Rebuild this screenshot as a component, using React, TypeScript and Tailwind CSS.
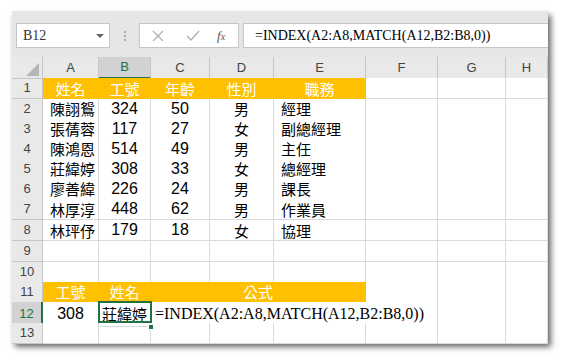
import * as React from "react";

const cols = "grid grid-cols-[31px_56px_52px_59px_64px_92px_72px_68px_42px]";
const heights = [21, 20, 20, 20, 20, 20, 21, 21, 21, 20, 20, 21, 20];

const data = [
  ["陳詡鴛", "324", "50", "男", "經理"],
  ["張蒨蓉", "117", "27", "女", "副總經理"],
  ["陳鴻恩", "514", "49", "男", "主任"],
  ["莊緯婷", "308", "33", "女", "總經理"],
  ["廖善緯", "226", "24", "男", "課長"],
  ["林厚淳", "448", "62", "男", "作業員"],
  ["林玶伃", "179", "18", "女", "協理"],
];

const cjk = { fontFamily: '"Noto Sans CJK TC", "Noto Sans", sans-serif' };
const num = { fontFamily: '"Liberation Sans", Arial, sans-serif' };

function RowHead({ n, active }: { n: number; active?: boolean }) {
  return (
    <div
      className={
        active
          ? "flex items-center justify-center border-b border-r-2 border-b-[#c6c6c6] border-r-[#217346] bg-[#d2d2d2] text-[13px] text-[#217346]"
          : "flex items-center justify-center border-b border-r border-[#c6c6c6] bg-[#e9e9e9] text-[13px] text-[#444]"
      }
      style={{ fontFamily: '"Liberation Sans", sans-serif' }}
    >
      {n}
    </div>
  );
}

function Cell({
  children,
  align = "center",
  orange,
  digits,
  className = "",
}: {
  children?: React.ReactNode;
  align?: "left" | "center";
  orange?: boolean;
  digits?: boolean;
  className?: string;
}) {
  return (
    <div
      className={
        (orange
          ? "border-b border-r border-[#ffc000] bg-[#ffc000] text-white "
          : "border-b border-r border-[#dadada] bg-white text-black ") +
        (align === "left" ? "justify-start pl-[7px] " : "justify-center ") +
        (digits ? "text-[16px] " : "text-[15px] ") +
        "flex items-center whitespace-nowrap leading-none " +
        className
      }
      style={digits ? num : cjk}
    >
      {children}
    </div>
  );
}

function Blank() {
  return <Cell />;
}

export default function App() {
  return (
    <div className="h-[362px] w-[567px] overflow-hidden bg-white pl-[12px] pt-[11px]">
      <div className="h-[332px] w-[536px] bg-[#e6e6e6] shadow-[3px_4px_6px_rgba(0,0,0,0.6)]">
        {/* formula bar */}
        <div className="flex h-[46px] items-start pt-[12px]">
          <div className="ml-[4px] flex h-[25px] w-[94px] items-center justify-between border border-[#c6c6c6] bg-white pl-[6px] pr-[5px]">
            <span className="text-[14px] text-[#333]" style={{ fontFamily: '"Liberation Serif", serif' }}>
              B12
            </span>
            <span className="h-0 w-0 border-x-[4px] border-t-[4px] border-x-transparent border-t-[#666]" />
          </div>
          <div className="flex h-[25px] w-[29px] flex-col items-center justify-center gap-[2px]">
            <span className="h-[2px] w-[2px] bg-[#aaa]" />
            <span className="h-[2px] w-[2px] bg-[#aaa]" />
            <span className="h-[2px] w-[2px] bg-[#aaa]" />
          </div>
          <div className="flex h-[25px] w-[100px] items-center border border-[#c6c6c6] bg-white">
            <svg width="12" height="12" viewBox="0 0 12 12" className="ml-[12px]">
              <path d="M1 1 L11 11 M11 1 L1 11" stroke="#b0b0b0" strokeWidth="1.2" />
            </svg>
            <svg width="14" height="12" viewBox="0 0 14 12" className="ml-[22px]">
              <path d="M1 6 L5 10 L13 1" stroke="#b0b0b0" strokeWidth="1.4" fill="none" />
            </svg>
            <span
              className="ml-[17px] text-[13px] italic text-[#555]"
              style={{ fontFamily: '"Liberation Serif", serif' }}
            >
              f<span className="text-[10px]">x</span>
            </span>
          </div>
          <div className="ml-[4px] flex h-[25px] flex-1 items-center border border-r-0 border-[#c6c6c6] bg-white pl-[11px]">
            <span className="text-[14px] text-black" style={{ fontFamily: '"Liberation Serif", serif' }}>
              =INDEX(A2:A8,MATCH(A12,B2:B8,0))
            </span>
          </div>
        </div>

        {/* column headers */}
        <div className={cols + " h-[21px]"}>
          <div className="relative border-b border-r border-[#c6c6c6] bg-[#e9e9e9]">
            <span className="absolute bottom-[2px] right-[3px] h-0 w-0 border-b-[13px] border-l-[13px] border-b-[#b5b5b5] border-l-transparent" />
          </div>
          {["A", "B", "C", "D", "E", "F", "G", "H"].map((c) => (
            <div
              key={c}
              className={
                c === "B"
                  ? "flex items-center justify-center border-b-2 border-r border-b-[#217346] border-r-[#c6c6c6] bg-[#d2d2d2] text-[13px] text-[#217346]"
                  : "flex items-center justify-center border-b border-r border-[#c6c6c6] bg-[#e9e9e9] text-[13px] text-[#444]"
              }
              style={{ fontFamily: '"Liberation Sans", sans-serif' }}
            >
              {c}
            </div>
          ))}
        </div>

        {/* row 1 */}
        <div className={cols} style={{ height: heights[0] }}>
          <RowHead n={1} />
          <Cell orange>姓名</Cell>
          <Cell orange>工號</Cell>
          <Cell orange>年齡</Cell>
          <Cell orange>性別</Cell>
          <Cell orange>職務</Cell>
          <Blank />
          <Blank />
          <Blank />
        </div>

        {data.map((r, i) => (
          <div key={i} className={cols} style={{ height: heights[i + 1] }}>
            <RowHead n={i + 2} />
            <Cell align="left">{r[0]}</Cell>
            <Cell digits>{r[1]}</Cell>
            <Cell digits>{r[2]}</Cell>
            <Cell>{r[3]}</Cell>
            <Cell align="left" className="pl-[3px]">
              {r[4]}
            </Cell>
            <Blank />
            <Blank />
            <Blank />
          </div>
        ))}

        {[9, 10].map((n) => (
          <div key={n} className={cols} style={{ height: heights[n - 1] }}>
            <RowHead n={n} />
            <Blank />
            <Blank />
            <Blank />
            <Blank />
            <Blank />
            <Blank />
            <Blank />
            <Blank />
          </div>
        ))}

        {/* row 11 */}
        <div className={cols} style={{ height: heights[10] }}>
          <RowHead n={11} />
          <Cell orange>工號</Cell>
          <Cell orange>姓名</Cell>
          <Cell orange className="col-span-3">
            公式
          </Cell>
          <Blank />
          <Blank />
          <Blank />
        </div>

        {/* row 12 */}
        <div className={cols} style={{ height: heights[11] }}>
          <RowHead n={12} active />
          <Cell digits>308</Cell>
          <div className="relative">
            <Cell className="h-full pb-[1px]">莊緯婷</Cell>
            <div className="absolute -left-[1px] -top-[1px] h-[22px] w-[54px] border-2 border-[#217346]" />
            <div className="absolute -bottom-[3px] -right-[3px] h-[6px] w-[6px] border border-white bg-[#217346]" />
          </div>
          <div
            className="col-span-4 flex items-center whitespace-nowrap border-b border-r border-[#dadada] bg-white pl-[4px] text-[16px] text-black"
            style={{ fontFamily: '"Liberation Serif", serif' }}
          >
            =INDEX(A2:A8,MATCH(A12,B2:B8,0))
          </div>
          <Blank />
          <Blank />
        </div>

        {/* row 13 */}
        <div className={cols} style={{ height: heights[12] }}>
          <RowHead n={13} />
          <Blank />
          <Blank />
          <Blank />
          <Blank />
          <Blank />
          <Blank />
          <Blank />
          <Blank />
        </div>
      </div>
    </div>
  );
}
